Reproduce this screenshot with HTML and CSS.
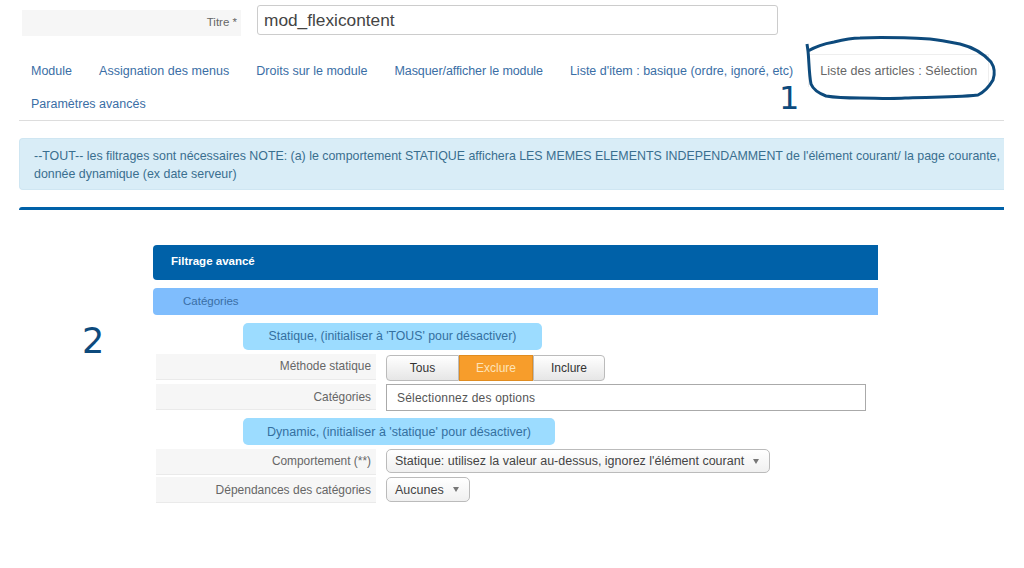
FILE: index.html
```html
<!DOCTYPE html>
<html lang="fr">
<head>
<meta charset="utf-8">
<title>mod_flexicontent</title>
<link rel="stylesheet" href="styles.css">
</head>
<body>
<div class="page">
  <div class="title-row">
    <label class="title-label">Titre *</label>
    <div class="title-input">mod_flexicontent</div>
  </div>
  <ul class="tabs">
    <li class="tab">Module</li>
    <li class="tab tab-wide">Assignation des menus</li>
    <li class="tab">Droits sur le module</li>
    <li class="tab tab-tight">Masquer/afficher le module</li>
    <li class="tab">Liste d'item : basique (ordre, ignoré, etc)</li>
    <li class="tab active">Liste des articles : Sélection</li>
    <li class="tab">Paramètres avancés</li>
  </ul>
  <div class="alert">--TOUT-- les filtrages sont nécessaires NOTE: (a) le comportement STATIQUE affichera LES MEMES ELEMENTS INDEPENDAMMENT de l'élément courant/ la page courante,<br>donnée dynamique (ex date serveur)</div>
  <div class="rule"></div>
  <section class="panel">
    <h3 class="panel-head">Filtrage avancé</h3>
    <h4 class="panel-sub">Catégories</h4>
    <div class="pill pill-static">Statique, (initialiser à 'TOUS' pour désactiver)</div>
    <div class="row row-method">
      <div class="row-label">Méthode statique</div>
      <div class="btn-group">
        <span class="btn btn-tous">Tous</span><span class="btn btn-on">Exclure</span><span class="btn btn-inc">Inclure</span>
      </div>
    </div>
    <div class="row row-cat">
      <div class="row-label row-label-low">Catégories</div>
      <div class="multi">Sélectionnez des options</div>
    </div>
    <div class="pill pill-dynamic">Dynamic, (initialiser à 'statique' pour désactiver)</div>
    <div class="row row-behave">
      <div class="row-label">Comportement (**)</div>
      <div class="select select-wide">Statique: utilisez la valeur au-dessus, ignorez l'élément courant<span class="caret"></span></div>
    </div>
    <div class="row row-dep">
      <div class="row-label row-label-long">Dépendances des catégories</div>
      <div class="select select-small">Aucunes<span class="caret"></span></div>
    </div>
  </section>
  <svg class="scribble" width="234" height="90" viewBox="0 0 234 90" aria-hidden="true">
    <path d="M17 14 L18 21 C30 14 38 13 44 12 C52 10 60 8 70 8 C95 7 120 8 140 9 C150 10 160 12 170 14 C182 17 194 24 201 32 C205 38 205 44 203 50 C199 57 194 62 188 65 C160 68 130 67 115 68 C100 69 85 68 70 68 C55 68 42 67 36 66 C28 63 23 59 21 54 C19 44 19 30 18 21" />
  </svg>
  <span class="mark mark-1">1</span>
  <span class="mark mark-2">2</span>
</div>
</body>
</html>
```
FILE: styles.css
```css
* { box-sizing: border-box; }
html, body { margin: 0; padding: 0; background: #fff; }
.page {
  position: relative;
  width: 1024px;
  height: 568px;
  overflow: hidden;
  padding: 5px 20px 0 19px;
  font-family: "Liberation Sans", Arial, sans-serif;
  font-size: 12.5px;
  color: #555;
}
.title-row { display: flex; align-items: flex-start; padding-left: 3px; }
.title-label {
  width: 219px;
  height: 26px;
  margin-top: 5px;
  padding-right: 4px;
  background: #f6f6f6;
  text-align: right;
  line-height: 24px;
  font-size: 11.5px;
  color: #666;
}
.title-input {
  width: 521px;
  height: 30px;
  margin-left: 16px;
  padding-left: 6px;
  border: 1px solid #ccc;
  border-radius: 3px;
  font-size: 17.3px;
  line-height: 29px;
  color: #444;
}
.tabs {
  display: flex;
  flex-wrap: wrap;
  list-style: none;
  margin: 18px 0 0;
  padding: 0;
  border-bottom: 1px solid #ddd;
  height: 67px;
  align-content: flex-start;
}
.tab {
  height: 33px;
  padding: 0 11px;
  margin-right: 3px;
  border: 1px solid transparent;
  border-bottom: 0;
  line-height: 33px;
  color: #3a6ea5;
  white-space: nowrap;
}
.tab-wide { letter-spacing: 0.05px; }
.tab-tight { letter-spacing: -0.08px; }
.tab.active {
  border-color: #eee;
  color: #666;
  margin-right: 0;
  letter-spacing: 0.07px;
}
.alert {
  width: 985px;
  height: 52px;
  margin-top: 17px;
  padding: 9px 0 0 14px;
  background: #d9edf7;
  border: 1px solid #cfe6f2;
  border-right: 0;
  border-radius: 4px 0 0 4px;
  line-height: 17.5px;
  font-size: 12.4px;
  color: #3a6f8f;
  white-space: nowrap;
}
.rule {
  width: 985px;
  height: 3px;
  margin-top: 17px;
  background: #0061a8;
  border-radius: 3px 0 0 0;
}
.panel { width: 725px; margin: 35px 0 0 134px; }
.panel-head {
  height: 35px;
  margin: 0;
  padding-left: 18px;
  background: #0061a8;
  border-radius: 4px 0 0 4px;
  color: #fff;
  font-size: 11.5px;
  font-weight: bold;
  line-height: 33px;
}
.panel-sub {
  height: 27px;
  margin: 8px 0 0;
  padding-left: 30px;
  background: #7fbdfd;
  border-radius: 4px 0 0 4px;
  color: #3a6ea5;
  font-size: 11.5px;
  font-weight: normal;
  line-height: 26px;
}
.pill {
  height: 27px;
  margin-top: 8px;
  margin-left: 90px;
  background: #9cdcff;
  border-radius: 5px;
  text-align: center;
  line-height: 26px;
  font-size: 12.3px;
  color: #34709f;
}
.pill-static { width: 299px; }
.pill-dynamic { width: 312px; margin-top: 7px; font-size: 12.5px; line-height: 28px; }
.row { display: flex; align-items: flex-start; }
.row-label {
  width: 220px;
  height: 26px;
  margin-left: 3px;
  margin-right: 10px;
  padding-right: 5px;
  background: #f6f6f6;
  border-bottom: 1px solid #eaeaea;
  text-align: right;
  line-height: 24px;
  font-size: 11.9px;
  color: #666;
}
.row-label-low { line-height: 26px; }
.row-label-long { font-size: 12px; line-height: 26px; }
.row-method { margin-top: 4px; }
.row-cat { margin-top: 3px; }
.row-behave { margin-top: 4px; }
.row-dep { margin-top: 2px; }
.btn-group { display: flex; margin-top: 1px; }
.btn {
  height: 26px;
  border: 1px solid #bbb;
  background: linear-gradient(#fff, #e6e6e6);
  text-align: center;
  line-height: 24px;
  color: #333;
  font-size: 12px;
}
.btn-tous { width: 73px; border-radius: 4px 0 0 4px; }
.btn-on { width: 74px; background: #f79d2b; border-color: #e08c20; color: #fde3b8; }
.btn-inc { width: 72px; border-radius: 0 4px 4px 0; }
.multi {
  width: 480px;
  height: 27px;
  padding-left: 10px;
  border: 1px solid #aaa;
  background: #fff;
  line-height: 26px;
  font-size: 12px;
  color: #555;
  letter-spacing: 0.2px;
}
.select {
  display: flex;
  align-items: center;
  padding-left: 8px;
  border: 1px solid #bbb;
  border-radius: 5px;
  background: linear-gradient(#fff, #f0f0f0);
  font-size: 12.5px;
  color: #444;
  white-space: nowrap;
}
.select-wide { width: 384px; height: 24px; }
.select-small { width: 84px; height: 25px; }
.caret {
  margin-left: 9px;
  border-left: 3.5px solid transparent;
  border-right: 3.5px solid transparent;
  border-top: 5px solid #777;
}
.scribble { position: absolute; left: 790px; top: 30px; }
.scribble path { fill: none; stroke: #0d4a7c; stroke-width: 3; stroke-linejoin: round; }
.mark {
  position: absolute;
  font-family: "DejaVu Sans", sans-serif;
  color: #0d4a7c;
  line-height: 1;
}
.mark-1 { left: 779px; top: 82px; font-size: 32px; }
.mark-2 { left: 82px; top: 324px; font-size: 35px; }
```
